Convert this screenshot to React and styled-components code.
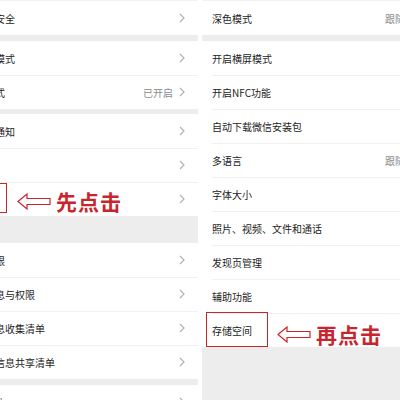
import styled, { createGlobalStyle } from "styled-components";

const GlobalStyle = createGlobalStyle`
  html, body {
    margin: 0;
    padding: 0;
    background: #ffffff;
  }
  body {
    font-family: "Noto Sans CJK SC", "Noto Sans", sans-serif;
  }
`;

const leftGroups = [
  { gap: 0, rows: [{ label: "账号与安全" }] },
  {
    gap: 6,
    rows: [{ label: "青少年模式" }, { label: "关怀模式", value: "已开启" }],
  },
  {
    gap: 5,
    rows: [
      { label: "新消息通知" },
      { label: "聊天" },
      { label: "通用", mark: "先点击" },
    ],
  },
  {
    gap: 27,
    rows: [
      { label: "朋友权限" },
      { label: "个人信息与权限" },
      { label: "个人信息收集清单" },
      { label: "第三方信息共享清单" },
    ],
  },
  { gap: 6, rows: [{ label: "关于微信" }] },
];

const rightGroups = [
  { gap: 0, rows: [{ label: "深色模式", value: "跟随系统" }] },
  {
    gap: 6,
    rows: [
      { label: "开启横屏模式" },
      { label: "开启NFC功能" },
      { label: "自动下载微信安装包", toggle: true },
      { label: "多语言", value: "跟随系统" },
      { label: "字体大小" },
      { label: "照片、视频、文件和通话" },
      { label: "发现页管理" },
      { label: "辅助功能" },
      { label: "存储空间", mark: "再点击" },
    ],
  },
];

function Chevron() {
  return (
    <svg width="6" height="10" viewBox="0 0 6 10">
      <polyline
        points="1,1 5,5 1,9"
        fill="none"
        stroke="#b3b3b3"
        strokeWidth="1.2"
      />
    </svg>
  );
}

function HollowArrow() {
  return (
    <svg width="34" height="17" viewBox="0 0 34 17">
      <polygon
        points="1,8.5 10,1 10,5.5 33,5.5 33,11.5 10,11.5 10,16"
        fill="none"
        stroke="#c9252c"
        strokeWidth="1.2"
        strokeLinejoin="miter"
      />
    </svg>
  );
}

function Row({ row, first, side }) {
  return (
    <RowBox $first={first}>
      <Label>{row.label}</Label>
      {row.value && <Value>{row.value}</Value>}
      {row.toggle ? <Toggle /> : <Chevron />}
      {row.mark && (
        <>
          <MarkBox $side={side} />
          <Callout $side={side}>
            <HollowArrow />
            <CalloutText>{row.mark}</CalloutText>
          </Callout>
        </>
      )}
    </RowBox>
  );
}

function Panel({ groups, side }) {
  return (
    <PanelBox $side={side}>
      <PanelInner $side={side}>
        {groups.map((group, gi) => (
          <Group key={gi} $gap={group.gap} $top={gi === 0}>
            {group.rows.map((row, ri) => (
              <Row key={row.label} row={row} first={ri === 0} side={side} />
            ))}
          </Group>
        ))}
      </PanelInner>
    </PanelBox>
  );
}

export default function App() {
  return (
    <>
      <GlobalStyle />
      <Page>
        <Panel groups={leftGroups} side="left" />
        <Divider />
        <Panel groups={rightGroups} side="right" />
      </Page>
    </>
  );
}

const Page = styled.main`
  width: 400px;
  height: 400px;
  display: flex;
  overflow: hidden;
`;

const Divider = styled.div`
  width: 4px;
  background: #ffffff;
  flex-shrink: 0;
`;

const PanelBox = styled.section`
  height: 400px;
  background: #ededed;
  overflow: hidden;
  width: ${(p) => (p.$side === "left" ? "198px" : "198px")};
  flex-shrink: 0;
`;

const PanelInner = styled.div`
  width: ${(p) => (p.$side === "left" ? "243px" : "248px")};
  margin-left: ${(p) => (p.$side === "left" ? "-45px" : "0")};
  display: flex;
  flex-direction: column;
`;

const Group = styled.div`
  margin-top: ${(p) => p.$gap}px;
  background: #ffffff;
  border-top: ${(p) => (p.$top ? "1px solid #f0f0f0" : "none")};
`;

const RowBox = styled.div`
  position: relative;
  height: 34px;
  display: flex;
  align-items: center;
  gap: 6px;
  padding: 0 13px 0 10px;

  &::before {
    content: "";
    display: ${(p) => (p.$first ? "none" : "block")};
    position: absolute;
    top: 0;
    left: 10px;
    right: 0;
    height: 1px;
    background: #f0f0f0;
  }
`;

const Label = styled.span`
  flex: 1;
  font-size: 10px;
  color: #1c1c1c;
  white-space: nowrap;
`;

const Value = styled.span`
  font-size: 10px;
  color: #8c8c8c;
  white-space: nowrap;
`;

const Toggle = styled.span`
  width: 36px;
  height: 20px;
  border-radius: 10px;
  border: 1px solid #e6e6e6;
  background: #ffffff;
  box-sizing: border-box;
`;

const MarkBox = styled.div`
  position: absolute;
  top: ${(p) => (p.$side === "left" ? "1px" : "-1px")};
  bottom: ${(p) => (p.$side === "left" ? "3px" : "0px")};
  left: ${(p) => (p.$side === "left" ? "4px" : "4px")};
  width: ${(p) => (p.$side === "left" ? "48px" : "62px")};
  border: 1px solid #c9252c;
  box-sizing: border-box;
  pointer-events: none;
`;

const Callout = styled.div`
  position: absolute;
  top: ${(p) => (p.$side === "left" ? "7px" : "9px")};
  left: ${(p) => (p.$side === "left" ? "62px" : "75px")};
  display: flex;
  align-items: center;
  gap: 5px;
`;

const CalloutText = styled.span`
  font-size: 21px;
  font-weight: 700;
  line-height: 24px;
  color: #c9252c;
  letter-spacing: 1px;
  white-space: nowrap;
`;
